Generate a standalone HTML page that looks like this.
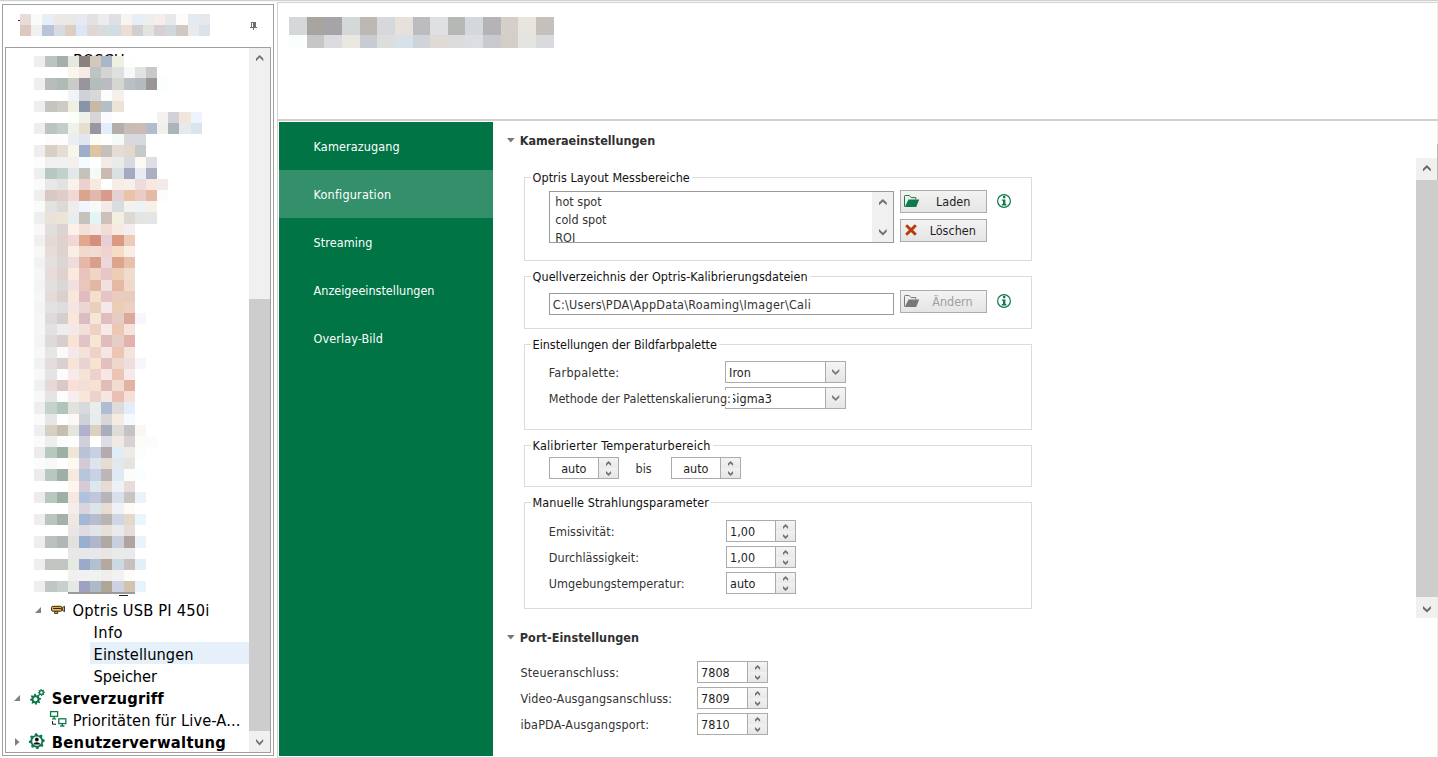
<!DOCTYPE html><html><head><meta charset="utf-8"><title>Optris Einstellungen</title><style>

html,body{margin:0;padding:0;background:#fff}
body{width:1438px;height:758px;position:relative;overflow:hidden;font-family:"DejaVu Sans Condensed","Liberation Sans","DejaVu Sans",sans-serif;font-size:12.5px;color:#1e1e1e}
div,span.t,svg{position:absolute;box-sizing:border-box}
span.t{white-space:pre;display:block}
.grp{border:1px solid #dcdcdc}
.leg{background:#fff;padding:0 2px}
.inp{border:1px solid #ababab;background:#fff}
.btn{border:1px solid #acacac;background:linear-gradient(#f3f3f3,#e5e5e5)}
.sbtn{background:linear-gradient(#f5f5f5,#e6e6e6);border-left:1px solid #ababab}
.nav{color:#fff}

</style></head><body>
<div style="left:0px;top:0px;width:1438px;height:1px;background:#d0d0d0"></div>
<div style="left:0px;top:1px;width:1438px;height:1px;background:#f6f6f6"></div>
<div style="left:2px;top:4px;width:272px;height:752px;border:1px solid #a0a0a0;background:#fff"></div>
<div style="left:5px;top:47px;width:266px;height:706px;border:1px solid #a0a0a0;background:#fff"></div>
<span class="t " style="left:73px;top:50.46px;font-size:16.3px;line-height:21px;font-weight:normal;color:#000;letter-spacing:0px;">BOSCH</span>
<svg width="274" height="758" style="left:0;top:0" shape-rendering="crispEdges"><rect x="20" y="14" width="11" height="11" fill="#e8dcd8"/><rect x="31" y="14" width="11" height="11" fill="#fafaf8"/><rect x="42" y="14" width="12" height="11" fill="#e8eef8"/><rect x="54" y="14" width="11" height="11" fill="#ece8e8"/><rect x="65" y="14" width="11" height="11" fill="#eae8e6"/><rect x="76" y="14" width="11" height="11" fill="#e6e8f2"/><rect x="87" y="14" width="11" height="11" fill="#e4e2e0"/><rect x="98" y="14" width="11" height="11" fill="#ececec"/><rect x="109" y="14" width="12" height="11" fill="#e0e0e4"/><rect x="121" y="14" width="11" height="11" fill="#f8f4f0"/><rect x="132" y="14" width="11" height="11" fill="#e8eef8"/><rect x="143" y="14" width="11" height="11" fill="#ecf0ec"/><rect x="154" y="14" width="11" height="11" fill="#f6eee8"/><rect x="165" y="14" width="11" height="11" fill="#e6e8ec"/><rect x="176" y="14" width="12" height="11" fill="#fefcfa"/><rect x="188" y="14" width="11" height="11" fill="#e4eaf0"/><rect x="199" y="14" width="11" height="11" fill="#e4e8ec"/><rect x="20" y="25" width="11" height="11" fill="#dcc8bc"/><rect x="31" y="25" width="11" height="11" fill="#f0f0f0"/><rect x="42" y="25" width="12" height="11" fill="#bac4d8"/><rect x="54" y="25" width="11" height="11" fill="#d8dce0"/><rect x="65" y="25" width="11" height="11" fill="#dccec0"/><rect x="76" y="25" width="11" height="11" fill="#dce6f4"/><rect x="87" y="25" width="11" height="11" fill="#e0d6d4"/><rect x="98" y="25" width="11" height="11" fill="#d8dcdc"/><rect x="109" y="25" width="12" height="11" fill="#d0dce6"/><rect x="121" y="25" width="11" height="11" fill="#ecdfd2"/><rect x="132" y="25" width="11" height="11" fill="#d0d0d0"/><rect x="143" y="25" width="11" height="11" fill="#e4e4de"/><rect x="154" y="25" width="11" height="11" fill="#d6d0d4"/><rect x="165" y="25" width="11" height="11" fill="#d0d8dc"/><rect x="176" y="25" width="12" height="11" fill="#d0c8c2"/><rect x="188" y="25" width="11" height="11" fill="#e8eaec"/><rect x="199" y="25" width="11" height="11" fill="#dae2ea"/><rect x="34" y="56" width="11" height="11" fill="#eeeeee"/><rect x="45" y="56" width="12" height="11" fill="#bcc4c0"/><rect x="57" y="56" width="11" height="11" fill="#a5b0ab"/><rect x="68" y="56" width="11" height="11" fill="#e4e8e0"/><rect x="79" y="56" width="11" height="11" fill="#8a807c"/><rect x="90" y="56" width="11" height="11" fill="#d4c8b8"/><rect x="101" y="56" width="11" height="11" fill="#a8b8c8"/><rect x="112" y="56" width="12" height="11" fill="#f0f0e0"/><rect x="124" y="56" width="11" height="11" fill="#fdfefe"/><rect x="68" y="67" width="11" height="11" fill="#fbf5ee"/><rect x="79" y="67" width="11" height="11" fill="#f5ebe4"/><rect x="90" y="67" width="11" height="11" fill="#bec4c6"/><rect x="101" y="67" width="11" height="11" fill="#d4d4d2"/><rect x="112" y="67" width="12" height="11" fill="#dfe1df"/><rect x="124" y="67" width="11" height="11" fill="#f5f9f7"/><rect x="135" y="67" width="11" height="11" fill="#e2e2e2"/><rect x="146" y="67" width="11" height="11" fill="#c8cac8"/><rect x="34" y="78" width="11" height="12" fill="#eeeeee"/><rect x="45" y="78" width="12" height="12" fill="#b8bcba"/><rect x="57" y="78" width="11" height="12" fill="#b0bab4"/><rect x="68" y="78" width="11" height="12" fill="#cacac8"/><rect x="79" y="78" width="11" height="12" fill="#98949c"/><rect x="90" y="78" width="11" height="12" fill="#b2beb8"/><rect x="101" y="78" width="11" height="12" fill="#babcc2"/><rect x="112" y="78" width="12" height="12" fill="#d6d6d0"/><rect x="124" y="78" width="11" height="12" fill="#bcc0c4"/><rect x="135" y="78" width="11" height="12" fill="#b4bac2"/><rect x="146" y="78" width="11" height="12" fill="#9a9696"/><rect x="157" y="78" width="11" height="12" fill="#fafefe"/><rect x="68" y="90" width="11" height="11" fill="#eef4f8"/><rect x="79" y="90" width="11" height="11" fill="#d0d0d8"/><rect x="90" y="90" width="11" height="11" fill="#d8d8d8"/><rect x="101" y="90" width="11" height="11" fill="#fcfcfc"/><rect x="112" y="90" width="12" height="11" fill="#f6f0ec"/><rect x="34" y="101" width="11" height="11" fill="#eeeeee"/><rect x="45" y="101" width="12" height="11" fill="#c6c4c0"/><rect x="57" y="101" width="11" height="11" fill="#cecac4"/><rect x="68" y="101" width="11" height="11" fill="#f0f0e2"/><rect x="79" y="101" width="11" height="11" fill="#8a94a8"/><rect x="90" y="101" width="11" height="11" fill="#c8b8a8"/><rect x="101" y="101" width="11" height="11" fill="#b4bec6"/><rect x="112" y="101" width="12" height="11" fill="#ece4d6"/><rect x="68" y="112" width="11" height="11" fill="#fcfefa"/><rect x="79" y="112" width="11" height="11" fill="#eef0ec"/><rect x="90" y="112" width="11" height="11" fill="#d6d6d8"/><rect x="101" y="112" width="11" height="11" fill="#fafaff"/><rect x="157" y="112" width="11" height="11" fill="#f4f2ee"/><rect x="168" y="112" width="11" height="11" fill="#d2d0da"/><rect x="179" y="112" width="12" height="11" fill="#f0e6dc"/><rect x="191" y="112" width="11" height="11" fill="#eef4fc"/><rect x="34" y="123" width="11" height="11" fill="#eeeeee"/><rect x="45" y="123" width="12" height="11" fill="#bcc4c0"/><rect x="57" y="123" width="11" height="11" fill="#c4cec8"/><rect x="68" y="123" width="11" height="11" fill="#eef2ea"/><rect x="79" y="123" width="11" height="11" fill="#e6dece"/><rect x="90" y="123" width="11" height="11" fill="#9a96a0"/><rect x="101" y="123" width="11" height="11" fill="#e2eefa"/><rect x="112" y="123" width="12" height="11" fill="#b4aeaa"/><rect x="124" y="123" width="11" height="11" fill="#c8bcb6"/><rect x="135" y="123" width="11" height="11" fill="#ccbcb2"/><rect x="146" y="123" width="11" height="11" fill="#b4bccc"/><rect x="157" y="123" width="11" height="11" fill="#f0f0ee"/><rect x="168" y="123" width="11" height="11" fill="#acb4b8"/><rect x="179" y="123" width="12" height="11" fill="#e6eaea"/><rect x="191" y="123" width="11" height="11" fill="#d8e4ee"/><rect x="45" y="134" width="12" height="11" fill="#fcfcfc"/><rect x="57" y="134" width="11" height="11" fill="#fcfcfc"/><rect x="68" y="134" width="11" height="11" fill="#eaeef2"/><rect x="79" y="134" width="11" height="11" fill="#e2e6ee"/><rect x="90" y="134" width="11" height="11" fill="#fcfcf4"/><rect x="112" y="134" width="12" height="11" fill="#f4faf8"/><rect x="124" y="134" width="11" height="11" fill="#d8d8de"/><rect x="135" y="134" width="11" height="11" fill="#d4dae0"/><rect x="34" y="145" width="11" height="12" fill="#eeeeee"/><rect x="45" y="145" width="12" height="12" fill="#d8d0c6"/><rect x="57" y="145" width="11" height="12" fill="#e6ded2"/><rect x="68" y="145" width="11" height="12" fill="#f6f6ea"/><rect x="79" y="145" width="11" height="12" fill="#9eaeca"/><rect x="90" y="145" width="11" height="12" fill="#e0c4a2"/><rect x="101" y="145" width="11" height="12" fill="#c6c0bc"/><rect x="112" y="145" width="12" height="12" fill="#e6dcd6"/><rect x="124" y="145" width="11" height="12" fill="#e4d8cc"/><rect x="135" y="145" width="11" height="12" fill="#c4cac8"/><rect x="34" y="157" width="11" height="11" fill="#fcfcfc"/><rect x="45" y="157" width="12" height="11" fill="#f0f0f0"/><rect x="57" y="157" width="11" height="11" fill="#f0f0f0"/><rect x="68" y="157" width="11" height="11" fill="#f4eeec"/><rect x="79" y="157" width="11" height="11" fill="#f2fbff"/><rect x="90" y="157" width="11" height="11" fill="#fcfffe"/><rect x="101" y="157" width="11" height="11" fill="#f4ebe6"/><rect x="112" y="157" width="12" height="11" fill="#eaeae8"/><rect x="124" y="157" width="11" height="11" fill="#d6dade"/><rect x="135" y="157" width="11" height="11" fill="#fafaf2"/><rect x="146" y="157" width="11" height="11" fill="#dedfe4"/><rect x="34" y="168" width="11" height="11" fill="#eeeeee"/><rect x="45" y="168" width="12" height="11" fill="#b8c8c0"/><rect x="57" y="168" width="11" height="11" fill="#c2d2ca"/><rect x="68" y="168" width="11" height="11" fill="#e2e8ea"/><rect x="79" y="168" width="11" height="11" fill="#c4c2ba"/><rect x="90" y="168" width="11" height="11" fill="#f4faf6"/><rect x="101" y="168" width="11" height="11" fill="#cabab2"/><rect x="112" y="168" width="12" height="11" fill="#dae0e4"/><rect x="124" y="168" width="11" height="11" fill="#a4a8c0"/><rect x="135" y="168" width="11" height="11" fill="#e8ecf0"/><rect x="146" y="168" width="11" height="11" fill="#aab0c2"/><rect x="34" y="179" width="11" height="11" fill="#fafafa"/><rect x="45" y="179" width="12" height="11" fill="#e8e8e8"/><rect x="57" y="179" width="11" height="11" fill="#e2e2e2"/><rect x="68" y="179" width="11" height="11" fill="#fcf0ea"/><rect x="79" y="179" width="11" height="11" fill="#ecd0d0"/><rect x="90" y="179" width="11" height="11" fill="#f8e8de"/><rect x="112" y="179" width="12" height="11" fill="#f8ece4"/><rect x="124" y="179" width="11" height="11" fill="#f8eeea"/><rect x="135" y="179" width="11" height="11" fill="#eedcda"/><rect x="146" y="179" width="11" height="11" fill="#f8e8e0"/><rect x="157" y="179" width="11" height="11" fill="#f4eaea"/><rect x="34" y="190" width="11" height="11" fill="#eeeeee"/><rect x="45" y="190" width="12" height="11" fill="#d8c8c4"/><rect x="57" y="190" width="11" height="11" fill="#e0ccc8"/><rect x="68" y="190" width="11" height="11" fill="#f0d8d6"/><rect x="79" y="190" width="11" height="11" fill="#dca48c"/><rect x="90" y="190" width="11" height="11" fill="#e0b8ac"/><rect x="101" y="190" width="11" height="11" fill="#d89a8c"/><rect x="112" y="190" width="12" height="11" fill="#e6d0d4"/><rect x="124" y="190" width="11" height="11" fill="#eac2a6"/><rect x="135" y="190" width="11" height="11" fill="#eaccc6"/><rect x="146" y="190" width="11" height="11" fill="#e4baa4"/><rect x="157" y="190" width="11" height="11" fill="#fcfcfe"/><rect x="34" y="201" width="11" height="11" fill="#fafafa"/><rect x="45" y="201" width="12" height="11" fill="#e2e2e0"/><rect x="57" y="201" width="11" height="11" fill="#dcdad8"/><rect x="68" y="201" width="11" height="11" fill="#f0ecec"/><rect x="79" y="201" width="11" height="11" fill="#f0f6fe"/><rect x="90" y="201" width="11" height="11" fill="#f8faf8"/><rect x="101" y="201" width="11" height="11" fill="#f2eae6"/><rect x="112" y="201" width="12" height="11" fill="#d8dee0"/><rect x="124" y="201" width="11" height="11" fill="#f4f2ec"/><rect x="135" y="201" width="11" height="11" fill="#ecf2f6"/><rect x="146" y="201" width="11" height="11" fill="#f6f0e6"/><rect x="34" y="212" width="11" height="12" fill="#eeeeee"/><rect x="45" y="212" width="12" height="12" fill="#e8e2d8"/><rect x="57" y="212" width="11" height="12" fill="#ece4d6"/><rect x="68" y="212" width="11" height="12" fill="#e8eef0"/><rect x="79" y="212" width="11" height="12" fill="#c4c2ba"/><rect x="90" y="212" width="11" height="12" fill="#e2f4f4"/><rect x="101" y="212" width="11" height="12" fill="#ccc0b8"/><rect x="112" y="212" width="12" height="12" fill="#f2f0e0"/><rect x="124" y="212" width="11" height="12" fill="#dcd8d4"/><rect x="135" y="212" width="11" height="12" fill="#e4e4e0"/><rect x="146" y="212" width="11" height="12" fill="#e4e6e6"/><rect x="34" y="224" width="11" height="11" fill="#f8f8f8"/><rect x="45" y="224" width="12" height="11" fill="#e2dedc"/><rect x="57" y="224" width="11" height="11" fill="#dcd4d4"/><rect x="68" y="224" width="11" height="11" fill="#fcf0e8"/><rect x="79" y="224" width="11" height="11" fill="#f4e0d8"/><rect x="90" y="224" width="11" height="11" fill="#f6e8e4"/><rect x="101" y="224" width="11" height="11" fill="#f2dcd6"/><rect x="112" y="224" width="12" height="11" fill="#f8eae0"/><rect x="124" y="224" width="11" height="11" fill="#f4eeee"/><rect x="34" y="235" width="11" height="11" fill="#f0f0f0"/><rect x="45" y="235" width="12" height="11" fill="#e6d8d6"/><rect x="57" y="235" width="11" height="11" fill="#e0d0ce"/><rect x="68" y="235" width="11" height="11" fill="#f0d8d8"/><rect x="79" y="235" width="11" height="11" fill="#e0a88c"/><rect x="90" y="235" width="11" height="11" fill="#d4907a"/><rect x="101" y="235" width="11" height="11" fill="#e6d0d6"/><rect x="112" y="235" width="12" height="11" fill="#da9a82"/><rect x="124" y="235" width="11" height="11" fill="#eaccb8"/><rect x="34" y="246" width="11" height="11" fill="#f8f8f8"/><rect x="45" y="246" width="12" height="11" fill="#e8dcda"/><rect x="57" y="246" width="11" height="11" fill="#e0d2d0"/><rect x="68" y="246" width="11" height="11" fill="#faeee4"/><rect x="79" y="246" width="11" height="11" fill="#f0d8cc"/><rect x="90" y="246" width="11" height="11" fill="#f0dcd2"/><rect x="101" y="246" width="11" height="11" fill="#f0d2ce"/><rect x="112" y="246" width="12" height="11" fill="#f6dcc4"/><rect x="124" y="246" width="11" height="11" fill="#f8eee4"/><rect x="34" y="257" width="11" height="11" fill="#f2f2f2"/><rect x="45" y="257" width="12" height="11" fill="#e4e0de"/><rect x="57" y="257" width="11" height="11" fill="#dcd6d4"/><rect x="68" y="257" width="11" height="11" fill="#f0dcdc"/><rect x="79" y="257" width="11" height="11" fill="#e4b8a4"/><rect x="90" y="257" width="11" height="11" fill="#d8a08c"/><rect x="101" y="257" width="11" height="11" fill="#ecd8dc"/><rect x="112" y="257" width="12" height="11" fill="#dca68e"/><rect x="124" y="257" width="11" height="11" fill="#e6c2ac"/><rect x="34" y="268" width="11" height="12" fill="#f6f6f6"/><rect x="45" y="268" width="12" height="12" fill="#e8dcda"/><rect x="57" y="268" width="11" height="12" fill="#e0d0ce"/><rect x="68" y="268" width="11" height="12" fill="#faeade"/><rect x="79" y="268" width="11" height="12" fill="#e8c4bc"/><rect x="90" y="268" width="11" height="12" fill="#f0d4c4"/><rect x="101" y="268" width="11" height="12" fill="#e8c6c6"/><rect x="112" y="268" width="12" height="12" fill="#eecdb4"/><rect x="124" y="268" width="11" height="12" fill="#f0dccf"/><rect x="34" y="280" width="11" height="11" fill="#f4f4f4"/><rect x="45" y="280" width="12" height="11" fill="#e0e0e0"/><rect x="57" y="280" width="11" height="11" fill="#d8d8d6"/><rect x="68" y="280" width="11" height="11" fill="#f2e0e0"/><rect x="79" y="280" width="11" height="11" fill="#e8c8bc"/><rect x="90" y="280" width="11" height="11" fill="#e2b8a4"/><rect x="101" y="280" width="11" height="11" fill="#f0e0e0"/><rect x="112" y="280" width="12" height="11" fill="#e4b8a2"/><rect x="124" y="280" width="11" height="11" fill="#f0d8ca"/><rect x="34" y="291" width="11" height="11" fill="#f6f6f6"/><rect x="45" y="291" width="12" height="11" fill="#e4dcd8"/><rect x="57" y="291" width="11" height="11" fill="#dcd0ce"/><rect x="68" y="291" width="11" height="11" fill="#f8e8dc"/><rect x="79" y="291" width="11" height="11" fill="#e0bcc0"/><rect x="90" y="291" width="11" height="11" fill="#f4dece"/><rect x="101" y="291" width="11" height="11" fill="#e4c4c4"/><rect x="112" y="291" width="12" height="11" fill="#eaccbc"/><rect x="124" y="291" width="11" height="11" fill="#eaccbc"/><rect x="34" y="302" width="11" height="11" fill="#f4f4f4"/><rect x="45" y="302" width="12" height="11" fill="#e2e2e2"/><rect x="57" y="302" width="11" height="11" fill="#dedede"/><rect x="68" y="302" width="11" height="11" fill="#f4e4e4"/><rect x="79" y="302" width="11" height="11" fill="#ecd6d2"/><rect x="90" y="302" width="11" height="11" fill="#ebcfbc"/><rect x="101" y="302" width="11" height="11" fill="#f6e8e8"/><rect x="112" y="302" width="12" height="11" fill="#ecceb6"/><rect x="124" y="302" width="11" height="11" fill="#ecd0c0"/><rect x="34" y="313" width="11" height="11" fill="#f6f6f6"/><rect x="45" y="313" width="12" height="11" fill="#dcdadb"/><rect x="57" y="313" width="11" height="11" fill="#d6ceca"/><rect x="68" y="313" width="11" height="11" fill="#f8e8dc"/><rect x="79" y="313" width="11" height="11" fill="#dcbcc2"/><rect x="90" y="313" width="11" height="11" fill="#f6e6d6"/><rect x="101" y="313" width="11" height="11" fill="#e0bebe"/><rect x="112" y="313" width="12" height="11" fill="#e6ccc4"/><rect x="124" y="313" width="11" height="11" fill="#dca89e"/><rect x="135" y="313" width="11" height="11" fill="#f8f6fc"/><rect x="34" y="324" width="11" height="11" fill="#f6f6f6"/><rect x="45" y="324" width="12" height="11" fill="#e2e2e2"/><rect x="57" y="324" width="11" height="11" fill="#ecedec"/><rect x="68" y="324" width="11" height="11" fill="#f4e8e8"/><rect x="79" y="324" width="11" height="11" fill="#f0e0d8"/><rect x="90" y="324" width="11" height="11" fill="#eed0c4"/><rect x="101" y="324" width="11" height="11" fill="#f6eae8"/><rect x="112" y="324" width="12" height="11" fill="#ecc8b4"/><rect x="124" y="324" width="11" height="11" fill="#f6e4dc"/><rect x="34" y="335" width="11" height="12" fill="#f4f4f4"/><rect x="45" y="335" width="12" height="12" fill="#dedada"/><rect x="57" y="335" width="11" height="12" fill="#d8cecc"/><rect x="68" y="335" width="11" height="12" fill="#f8e4d6"/><rect x="79" y="335" width="11" height="12" fill="#e0c4c8"/><rect x="90" y="335" width="11" height="12" fill="#f6e6d4"/><rect x="101" y="335" width="11" height="12" fill="#e0bcba"/><rect x="112" y="335" width="12" height="12" fill="#e8ccc6"/><rect x="124" y="335" width="11" height="12" fill="#e0b4ac"/><rect x="34" y="347" width="11" height="11" fill="#f8f8f8"/><rect x="45" y="347" width="12" height="11" fill="#e6e6e4"/><rect x="57" y="347" width="11" height="11" fill="#fafafa"/><rect x="68" y="347" width="11" height="11" fill="#f4e8ea"/><rect x="79" y="347" width="11" height="11" fill="#f4e2da"/><rect x="90" y="347" width="11" height="11" fill="#eed2c8"/><rect x="101" y="347" width="11" height="11" fill="#f6e6e2"/><rect x="112" y="347" width="12" height="11" fill="#ecc6b2"/><rect x="124" y="347" width="11" height="11" fill="#f4e4dc"/><rect x="34" y="358" width="11" height="11" fill="#f2f2f2"/><rect x="45" y="358" width="12" height="11" fill="#e4dcdc"/><rect x="57" y="358" width="11" height="11" fill="#dcd0ce"/><rect x="68" y="358" width="11" height="11" fill="#f8e4d6"/><rect x="79" y="358" width="11" height="11" fill="#e8d2d2"/><rect x="90" y="358" width="11" height="11" fill="#f6e4d0"/><rect x="101" y="358" width="11" height="11" fill="#e2c0c0"/><rect x="112" y="358" width="12" height="11" fill="#eed8cc"/><rect x="124" y="358" width="11" height="11" fill="#eedede"/><rect x="135" y="358" width="11" height="11" fill="#f8f6fc"/><rect x="34" y="369" width="11" height="11" fill="#f8f8f8"/><rect x="45" y="369" width="12" height="11" fill="#e4e4e4"/><rect x="57" y="369" width="11" height="11" fill="#fcfcfc"/><rect x="68" y="369" width="11" height="11" fill="#f6eaec"/><rect x="79" y="369" width="11" height="11" fill="#f4e4d8"/><rect x="90" y="369" width="11" height="11" fill="#eed0cc"/><rect x="101" y="369" width="11" height="11" fill="#f6e6e4"/><rect x="112" y="369" width="12" height="11" fill="#ecc4b4"/><rect x="124" y="369" width="11" height="11" fill="#f8eaea"/><rect x="34" y="380" width="11" height="11" fill="#f0f0f0"/><rect x="45" y="380" width="12" height="11" fill="#e6d8d4"/><rect x="57" y="380" width="11" height="11" fill="#dcc8c6"/><rect x="68" y="380" width="11" height="11" fill="#f8e0d4"/><rect x="79" y="380" width="11" height="11" fill="#f2e0d8"/><rect x="90" y="380" width="11" height="11" fill="#f6e2d0"/><rect x="101" y="380" width="11" height="11" fill="#e2bcb8"/><rect x="112" y="380" width="12" height="11" fill="#f0dcd0"/><rect x="124" y="380" width="11" height="11" fill="#e0b4a0"/><rect x="34" y="391" width="11" height="11" fill="#f8f8f8"/><rect x="45" y="391" width="12" height="11" fill="#e4e4e4"/><rect x="57" y="391" width="11" height="11" fill="#fcfcfc"/><rect x="68" y="391" width="11" height="11" fill="#f8ecee"/><rect x="79" y="391" width="11" height="11" fill="#f8e6d8"/><rect x="90" y="391" width="11" height="11" fill="#ecd2cc"/><rect x="101" y="391" width="11" height="11" fill="#f6e6e2"/><rect x="112" y="391" width="12" height="11" fill="#eac0b4"/><rect x="124" y="391" width="11" height="11" fill="#f4e0d6"/><rect x="34" y="402" width="11" height="12" fill="#eeeeee"/><rect x="45" y="402" width="12" height="12" fill="#c4d2cc"/><rect x="57" y="402" width="11" height="12" fill="#b0c4ba"/><rect x="68" y="402" width="11" height="12" fill="#e2e2dc"/><rect x="79" y="402" width="11" height="12" fill="#d6dade"/><rect x="90" y="402" width="11" height="12" fill="#eaeeea"/><rect x="101" y="402" width="11" height="12" fill="#b0bcd4"/><rect x="112" y="402" width="12" height="12" fill="#dedcd8"/><rect x="124" y="402" width="11" height="12" fill="#e2eefa"/><rect x="34" y="414" width="11" height="11" fill="#fafafa"/><rect x="45" y="414" width="12" height="11" fill="#e6e6e6"/><rect x="68" y="414" width="11" height="11" fill="#fef8f4"/><rect x="79" y="414" width="11" height="11" fill="#d0d2d8"/><rect x="90" y="414" width="11" height="11" fill="#e8ecec"/><rect x="101" y="414" width="11" height="11" fill="#dad6d6"/><rect x="112" y="414" width="12" height="11" fill="#f4ece2"/><rect x="124" y="414" width="11" height="11" fill="#f4fafe"/><rect x="34" y="425" width="11" height="11" fill="#eeeeee"/><rect x="45" y="425" width="12" height="11" fill="#d6d0c4"/><rect x="57" y="425" width="11" height="11" fill="#c6beae"/><rect x="68" y="425" width="11" height="11" fill="#e4e6de"/><rect x="79" y="425" width="11" height="11" fill="#aeb2ce"/><rect x="90" y="425" width="11" height="11" fill="#dcd0c0"/><rect x="101" y="425" width="11" height="11" fill="#a8aebe"/><rect x="112" y="425" width="12" height="11" fill="#dedcd6"/><rect x="124" y="425" width="11" height="11" fill="#c6c2c4"/><rect x="135" y="425" width="11" height="11" fill="#faf6f0"/><rect x="34" y="436" width="11" height="11" fill="#fafafa"/><rect x="45" y="436" width="12" height="11" fill="#eeeeee"/><rect x="57" y="436" width="11" height="11" fill="#fcfcfc"/><rect x="68" y="436" width="11" height="11" fill="#fcfefc"/><rect x="79" y="436" width="11" height="11" fill="#d0d0dc"/><rect x="90" y="436" width="11" height="11" fill="#fffefa"/><rect x="101" y="436" width="11" height="11" fill="#dcdee4"/><rect x="112" y="436" width="12" height="11" fill="#f0eae4"/><rect x="124" y="436" width="11" height="11" fill="#d8d2d4"/><rect x="135" y="436" width="11" height="11" fill="#fafcf8"/><rect x="146" y="436" width="11" height="11" fill="#fafcfe"/><rect x="34" y="447" width="11" height="11" fill="#ececec"/><rect x="45" y="447" width="12" height="11" fill="#b8c8c0"/><rect x="57" y="447" width="11" height="11" fill="#9cb0a6"/><rect x="68" y="447" width="11" height="11" fill="#f0e6d8"/><rect x="79" y="447" width="11" height="11" fill="#bac2d8"/><rect x="90" y="447" width="11" height="11" fill="#c6d2e4"/><rect x="101" y="447" width="11" height="11" fill="#b4aab0"/><rect x="112" y="447" width="12" height="11" fill="#e0ecf8"/><rect x="124" y="447" width="11" height="11" fill="#eeeae6"/><rect x="135" y="447" width="11" height="11" fill="#fafeff"/><rect x="34" y="458" width="11" height="11" fill="#fcfcfc"/><rect x="45" y="458" width="12" height="11" fill="#f8f8f8"/><rect x="68" y="458" width="11" height="11" fill="#fef8f2"/><rect x="79" y="458" width="11" height="11" fill="#d4cad6"/><rect x="90" y="458" width="11" height="11" fill="#dce4f0"/><rect x="101" y="458" width="11" height="11" fill="#e6dcd2"/><rect x="112" y="458" width="12" height="11" fill="#e4e8ea"/><rect x="124" y="458" width="11" height="11" fill="#e6e4e0"/><rect x="34" y="469" width="11" height="12" fill="#ececec"/><rect x="45" y="469" width="12" height="12" fill="#b8c8c0"/><rect x="57" y="469" width="11" height="12" fill="#9cb0a6"/><rect x="68" y="469" width="11" height="12" fill="#f6eade"/><rect x="79" y="469" width="11" height="12" fill="#b8c6dc"/><rect x="90" y="469" width="11" height="12" fill="#c8d2e4"/><rect x="101" y="469" width="11" height="12" fill="#bcb6b8"/><rect x="112" y="469" width="12" height="12" fill="#e0eaf6"/><rect x="124" y="469" width="11" height="12" fill="#fcfcf8"/><rect x="135" y="469" width="11" height="12" fill="#fafeff"/><rect x="68" y="481" width="11" height="11" fill="#fef6ee"/><rect x="79" y="481" width="11" height="11" fill="#d6cad6"/><rect x="90" y="481" width="11" height="11" fill="#dce8f0"/><rect x="101" y="481" width="11" height="11" fill="#e8dcd2"/><rect x="112" y="481" width="12" height="11" fill="#eef2f6"/><rect x="124" y="481" width="11" height="11" fill="#e8dcda"/><rect x="34" y="492" width="11" height="11" fill="#ececec"/><rect x="45" y="492" width="12" height="11" fill="#b8c8c0"/><rect x="57" y="492" width="11" height="11" fill="#9cb0a6"/><rect x="68" y="492" width="11" height="11" fill="#f6e8e0"/><rect x="79" y="492" width="11" height="11" fill="#aec4de"/><rect x="90" y="492" width="11" height="11" fill="#c2c6da"/><rect x="101" y="492" width="11" height="11" fill="#b8b4bc"/><rect x="112" y="492" width="12" height="11" fill="#dadfec"/><rect x="124" y="492" width="11" height="11" fill="#c8c4c2"/><rect x="135" y="492" width="11" height="11" fill="#eaf2fa"/><rect x="68" y="503" width="11" height="11" fill="#f2eeea"/><rect x="79" y="503" width="11" height="11" fill="#dcd4dc"/><rect x="90" y="503" width="11" height="11" fill="#dee4ec"/><rect x="101" y="503" width="11" height="11" fill="#e8dcd2"/><rect x="112" y="503" width="12" height="11" fill="#eef2f4"/><rect x="124" y="503" width="11" height="11" fill="#fefaf6"/><rect x="34" y="514" width="11" height="11" fill="#eeeeee"/><rect x="45" y="514" width="12" height="11" fill="#bcc4c0"/><rect x="57" y="514" width="11" height="11" fill="#a4b0aa"/><rect x="68" y="514" width="11" height="11" fill="#f0e8e0"/><rect x="79" y="514" width="11" height="11" fill="#a2b8d4"/><rect x="90" y="514" width="11" height="11" fill="#b8bcd0"/><rect x="101" y="514" width="11" height="11" fill="#b8b4b2"/><rect x="112" y="514" width="12" height="11" fill="#d0d6e2"/><rect x="124" y="514" width="11" height="11" fill="#e4d8ca"/><rect x="135" y="514" width="11" height="11" fill="#eaf6fe"/><rect x="68" y="525" width="11" height="11" fill="#e8e6e6"/><rect x="79" y="525" width="11" height="11" fill="#dedce0"/><rect x="90" y="525" width="11" height="11" fill="#e2e4e8"/><rect x="101" y="525" width="11" height="11" fill="#e6e0d8"/><rect x="112" y="525" width="12" height="11" fill="#eaeaec"/><rect x="124" y="525" width="11" height="11" fill="#e6dcd8"/><rect x="34" y="536" width="11" height="12" fill="#eeeeee"/><rect x="45" y="536" width="12" height="12" fill="#bcc0be"/><rect x="57" y="536" width="11" height="12" fill="#b0b8b4"/><rect x="68" y="536" width="11" height="12" fill="#e2e2dc"/><rect x="79" y="536" width="11" height="12" fill="#98b0d0"/><rect x="90" y="536" width="11" height="12" fill="#b0b6cc"/><rect x="101" y="536" width="11" height="12" fill="#b0a8a2"/><rect x="112" y="536" width="12" height="12" fill="#c8d0dc"/><rect x="124" y="536" width="11" height="12" fill="#b0a4a0"/><rect x="135" y="536" width="11" height="12" fill="#eaf2fc"/><rect x="68" y="548" width="11" height="11" fill="#e8e8e8"/><rect x="79" y="548" width="11" height="11" fill="#e6e8ea"/><rect x="90" y="548" width="11" height="11" fill="#e6e8ea"/><rect x="101" y="548" width="11" height="11" fill="#e8e6e2"/><rect x="112" y="548" width="12" height="11" fill="#eaeaea"/><rect x="124" y="548" width="11" height="11" fill="#eaeaea"/><rect x="34" y="559" width="11" height="11" fill="#eeeeee"/><rect x="45" y="559" width="12" height="11" fill="#c2c4c2"/><rect x="57" y="559" width="11" height="11" fill="#c2c4c2"/><rect x="68" y="559" width="11" height="11" fill="#e6e8e2"/><rect x="79" y="559" width="11" height="11" fill="#9aaac8"/><rect x="90" y="559" width="11" height="11" fill="#b2c0d0"/><rect x="101" y="559" width="11" height="11" fill="#b4a8a0"/><rect x="112" y="559" width="12" height="11" fill="#ccd8e2"/><rect x="124" y="559" width="11" height="11" fill="#c8c0c0"/><rect x="135" y="559" width="11" height="11" fill="#e2eef8"/><rect x="68" y="570" width="11" height="11" fill="#f0f0f0"/><rect x="79" y="570" width="11" height="11" fill="#f0f2f2"/><rect x="90" y="570" width="11" height="11" fill="#f0f2f2"/><rect x="101" y="570" width="11" height="11" fill="#f0eeec"/><rect x="112" y="570" width="12" height="11" fill="#f2f2f2"/><rect x="124" y="570" width="11" height="11" fill="#fefcf8"/><rect x="34" y="581" width="11" height="11" fill="#eeeeee"/><rect x="45" y="581" width="12" height="11" fill="#c0c6c4"/><rect x="57" y="581" width="11" height="11" fill="#c6d0cc"/><rect x="68" y="581" width="11" height="11" fill="#e6e8e4"/><rect x="79" y="581" width="11" height="11" fill="#9ea2c0"/><rect x="90" y="581" width="11" height="11" fill="#acbac8"/><rect x="101" y="581" width="11" height="11" fill="#b0a698"/><rect x="112" y="581" width="12" height="11" fill="#ccd2e0"/><rect x="124" y="581" width="11" height="11" fill="#d0c4b0"/><rect x="135" y="581" width="11" height="11" fill="#e6f2fc"/><rect x="68" y="592" width="67" height="2" fill="#9a9a9a"/><rect x="119" y="595" width="9" height="1" fill="#222"/><rect x="18" y="20" width="2" height="1" fill="#5a2020"/></svg>
<svg width="9" height="10" viewBox="0 0 9 10" style="left:249px;top:21px" shape-rendering="crispEdges"><rect x="2" y="1" width="5" height="5" fill="#6e6e6e"/><rect x="3" y="2" width="1" height="4" fill="#fff"/><rect x="1" y="6" width="7" height="1" fill="#6e6e6e"/><rect x="4" y="7" width="1" height="2" fill="#6e6e6e"/></svg>
<div style="left:249px;top:48px;width:21px;height:704px;background:#f0f0f0"></div>
<div style="left:249px;top:299px;width:21px;height:432px;background:#cdcdcd"></div>
<svg width="7.3" height="6.2" viewBox="0 0 7.3 6.2" style="left:255.9px;top:55px;overflow:visible"><path d="M0.00 6.20 L0.00 3.60 L3.65 0.00 L7.30 3.60 L7.30 6.20 L3.65 2.60z" fill="#727272"/></svg>
<svg width="7.2" height="6.4" viewBox="0 0 7.2 6.4" style="left:255.9px;top:738.8px;overflow:visible"><path d="M0.00 0.00 L0.00 2.60 L3.60 6.40 L7.20 2.60 L7.20 0.00 L3.60 3.80z" fill="#727272"/></svg>
<div style="left:90px;top:642px;width:159px;height:22px;background:#e5f0fb"></div>
<span class="t " style="left:72.6px;top:599.86px;font-size:16.3px;line-height:21px;font-weight:normal;color:#000;letter-spacing:0.19px;">Optris USB PI 450i</span>
<span class="t " style="left:93.6px;top:621.86px;font-size:16.3px;line-height:21px;font-weight:normal;color:#000;letter-spacing:0.4px;">Info</span>
<span class="t " style="left:93.6px;top:643.86px;font-size:16.3px;line-height:21px;font-weight:normal;color:#000;letter-spacing:0.05px;">Einstellungen</span>
<span class="t " style="left:93.6px;top:665.86px;font-size:16.3px;line-height:21px;font-weight:normal;color:#000;letter-spacing:-0.1px;">Speicher</span>
<span class="t " style="left:51.8px;top:688.13px;font-size:16.4px;line-height:21px;font-weight:bold;color:#000;letter-spacing:0.2px;">Serverzugriff</span>
<span class="t " style="left:72.8px;top:709.86px;font-size:16.3px;line-height:21px;font-weight:normal;color:#000;letter-spacing:0.12px;">Prioritäten für Live-A...</span>
<span class="t " style="left:51.8px;top:731.53px;font-size:16.4px;line-height:21px;font-weight:bold;color:#000;letter-spacing:0.28px;">Benutzerverwaltung</span>
<svg width="7" height="7" viewBox="0 0 7 7" style="left:35px;top:607px"><path d="M6 0V6H0z" fill="#808080"/></svg>
<svg width="7" height="7" viewBox="0 0 7 7" style="left:14px;top:695px"><path d="M6 0V6H0z" fill="#808080"/></svg>
<svg width="6" height="9" viewBox="0 0 6 9" style="left:15px;top:738px"><path d="M0 0L4.5 4L0 8z" fill="#808080"/></svg>
<svg width="16" height="10" viewBox="0 0 16 10" style="left:50px;top:605px">
<rect x="1.55" y="1.3" width="10.3" height="4.9" rx="1.3" fill="#f6b63a" stroke="#262626" stroke-width="1"/>
<rect x="3.2" y="2.9" width="7.7" height="1.1" fill="#262626"/>
<path d="M12.4 2.5 L14.5 1.3 V6.6 L12.4 5.4z" fill="#f6b63a" stroke="#262626" stroke-width="0.9" stroke-linejoin="round"/>
<rect x="4.6" y="6.8" width="3.1" height="1.7" fill="#f6b63a" stroke="#262626" stroke-width="0.8"/>
</svg>
<svg width="18" height="18" viewBox="0 0 18 18" style="left:29px;top:688px"><path d="M11.99,10.11 L12.10,11.20 L10.52,12.00 L10.29,12.77 L11.16,14.31 L10.46,15.16 L8.78,14.61 L8.07,14.99 L7.59,16.69 L6.50,16.80 L5.70,15.22 L4.93,14.99 L3.39,15.86 L2.54,15.16 L3.09,13.48 L2.71,12.77 L1.01,12.29 L0.90,11.20 L2.48,10.40 L2.71,9.63 L1.84,8.09 L2.54,7.24 L4.22,7.79 L4.93,7.41 L5.41,5.71 L6.50,5.60 L7.30,7.18 L8.07,7.41 L9.61,6.54 L10.46,7.24 L9.91,8.92 L10.29,9.63z M8.50,11.20 A2.0,2.0 0 1 0 4.50,11.20 A2.0,2.0 0 1 0 8.50,11.20z" fill="#0e7a4b" fill-rule="evenodd"/><path d="M15.93,3.80 L16.00,4.50 L14.95,5.01 L14.80,5.49 L15.39,6.50 L14.95,7.05 L13.84,6.66 L13.39,6.90 L13.10,8.03 L12.40,8.10 L11.89,7.05 L11.41,6.90 L10.40,7.49 L9.85,7.05 L10.24,5.94 L10.00,5.49 L8.87,5.20 L8.80,4.50 L9.85,3.99 L10.00,3.51 L9.41,2.50 L9.85,1.95 L10.96,2.34 L11.41,2.10 L11.70,0.97 L12.40,0.90 L12.91,1.95 L13.39,2.10 L14.40,1.51 L14.95,1.95 L14.56,3.06 L14.80,3.51z M13.60,4.50 A1.2,1.2 0 1 0 11.20,4.50 A1.2,1.2 0 1 0 13.60,4.50z" fill="#0e7a4b" fill-rule="evenodd"/></svg>
<svg width="18" height="17" viewBox="0 0 18 17" style="left:49px;top:710px" fill="none" stroke="#0e7a4b" stroke-width="1.3">
<rect x="1.6" y="1.6" width="7" height="4.8"/><path d="M5.1 6.4V8.6 M3 8.8H7.2"/>
<rect x="9.8" y="8.8" width="7" height="4.8"/><path d="M13.3 13.6V15.8 M11.2 16H15.4"/>
<path d="M3.5 11V14.2H7" stroke="#1a1a1a" stroke-width="1"/>
</svg>
<svg width="18" height="18" viewBox="0 0 18 18" style="left:28px;top:732px"><path d="M16.65,7.64 L16.80,9.20 L14.98,10.43 L14.62,11.61 L15.45,13.64 L14.46,14.86 L12.30,14.44 L11.21,15.02 L10.36,17.05 L8.80,17.20 L7.57,15.38 L6.39,15.02 L4.36,15.85 L3.14,14.86 L3.56,12.70 L2.98,11.61 L0.95,10.76 L0.80,9.20 L2.62,7.97 L2.98,6.79 L2.15,4.76 L3.14,3.54 L5.30,3.96 L6.39,3.38 L7.24,1.35 L8.80,1.20 L10.03,3.02 L11.21,3.38 L13.24,2.55 L14.46,3.54 L14.04,5.70 L14.62,6.79z M13.40,9.20 A4.6,4.6 0 1 0 4.20,9.20 A4.6,4.6 0 1 0 13.40,9.20z" fill="#0e7a4b" fill-rule="evenodd"/><circle cx="8.8" cy="7.5" r="1.9" fill="#111"/><path d="M5.5 12.4 C5.5 9.4 12.1 9.4 12.1 12.4z" fill="#111"/></svg>
<div style="left:277px;top:2px;width:1161px;height:756px;border:1px solid #d4d4d4;border-right:1px solid #ececec;background:#fff"></div>
<div style="left:278px;top:119px;width:1160px;height:2px;background:#d0d0d0"></div>
<svg width="300" height="60" style="left:280px;top:0" shape-rendering="crispEdges"><g transform="translate(-280,0)"><rect x="289" y="17" width="18" height="18" fill="#d4d8d8"/><rect x="307" y="17" width="17" height="18" fill="#a8a4a0"/><rect x="324" y="17" width="18" height="18" fill="#a6a4a6"/><rect x="342" y="17" width="18" height="18" fill="#d4d8d8"/><rect x="360" y="17" width="17" height="18" fill="#beb8b4"/><rect x="377" y="17" width="18" height="18" fill="#d6d8dc"/><rect x="395" y="17" width="18" height="18" fill="#e8e0da"/><rect x="413" y="17" width="17" height="18" fill="#bcbcbe"/><rect x="430" y="17" width="18" height="18" fill="#dfe0e2"/><rect x="448" y="17" width="17" height="18" fill="#b6b8b6"/><rect x="465" y="17" width="18" height="18" fill="#d2d8dc"/><rect x="483" y="17" width="18" height="18" fill="#b4b4b6"/><rect x="501" y="17" width="17" height="18" fill="#d6cec8"/><rect x="518" y="17" width="18" height="18" fill="#e8e4de"/><rect x="536" y="17" width="18" height="18" fill="#c4c0bc"/><rect x="289" y="35" width="18" height="13" fill="#fafffe"/><rect x="307" y="35" width="17" height="13" fill="#c6c6c6"/><rect x="324" y="35" width="18" height="13" fill="#dcdce0"/><rect x="342" y="35" width="18" height="13" fill="#eae6e0"/><rect x="360" y="35" width="17" height="13" fill="#c8ccd2"/><rect x="377" y="35" width="18" height="13" fill="#dcdedc"/><rect x="395" y="35" width="18" height="13" fill="#d8e0e8"/><rect x="413" y="35" width="17" height="13" fill="#ced4d8"/><rect x="430" y="35" width="18" height="13" fill="#e0dad4"/><rect x="448" y="35" width="17" height="13" fill="#dcdcdc"/><rect x="465" y="35" width="18" height="13" fill="#dcdee2"/><rect x="483" y="35" width="18" height="13" fill="#c8cace"/><rect x="501" y="35" width="17" height="13" fill="#d4cec8"/><rect x="518" y="35" width="18" height="13" fill="#e4e4e0"/><rect x="536" y="35" width="18" height="13" fill="#d8dade"/></g></svg>
<div style="left:279px;top:122px;width:214px;height:634px;background:#007444"></div>
<div style="left:279px;top:170px;width:214px;height:48px;background:#33906a"></div>
<span class="t " style="left:313.6px;top:138.48px;font-size:12.5px;line-height:17px;font-weight:normal;color:#fff;letter-spacing:0.12px;">Kamerazugang</span>
<span class="t " style="left:313.6px;top:186.48px;font-size:12.5px;line-height:17px;font-weight:normal;color:#fff;letter-spacing:0.2px;">Konfiguration</span>
<span class="t " style="left:313.6px;top:234.48px;font-size:12.5px;line-height:17px;font-weight:normal;color:#fff;letter-spacing:0.1px;">Streaming</span>
<span class="t " style="left:313.6px;top:282.47px;font-size:12.5px;line-height:17px;font-weight:normal;color:#fff;letter-spacing:0.0px;">Anzeigeeinstellungen</span>
<span class="t " style="left:313.6px;top:330.47px;font-size:12.5px;line-height:17px;font-weight:normal;color:#fff;letter-spacing:0.1px;">Overlay-Bild</span>
<svg width="8" height="5" viewBox="0 0 8 5" style="left:507px;top:138px"><path d="M0 0H7.6L3.8 4.4z" fill="#777"/></svg>
<span class="t " style="left:519.8px;top:132.08px;font-size:12.5px;line-height:17px;font-weight:bold;color:#303030;letter-spacing:0px;">Kameraeinstellungen</span>
<svg width="8" height="5" viewBox="0 0 8 5" style="left:507px;top:635px"><path d="M0 0H7.6L3.8 4.4z" fill="#777"/></svg>
<span class="t " style="left:519.8px;top:629.07px;font-size:12.5px;line-height:17px;font-weight:bold;color:#303030;letter-spacing:0.06px;">Port-Einstellungen</span>
<div class="grp" style="left:524px;top:177px;width:508px;height:84px;"></div>
<span class="t leg" style="left:530.6px;top:169.6px;line-height:16px;color:#111;letter-spacing:0.03px">Optris Layout Messbereiche</span>
<div class="grp" style="left:524px;top:276px;width:508px;height:53px;"></div>
<span class="t leg" style="left:530.6px;top:268.6px;line-height:16px;color:#111;letter-spacing:0.04px">Quellverzeichnis der Optris-Kalibrierungsdateien</span>
<div class="grp" style="left:524px;top:344px;width:508px;height:86px;"></div>
<span class="t leg" style="left:530.6px;top:336.6px;line-height:16px;color:#111;letter-spacing:-0.04px">Einstellungen der Bildfarbpalette</span>
<div class="grp" style="left:524px;top:445px;width:508px;height:42px;"></div>
<span class="t leg" style="left:530.6px;top:437.6px;line-height:16px;color:#111;letter-spacing:0.19px">Kalibrierter Temperaturbereich</span>
<div class="grp" style="left:524px;top:502px;width:508px;height:107px;"></div>
<span class="t leg" style="left:530.6px;top:494.6px;line-height:16px;color:#111;letter-spacing:0.07px">Manuelle Strahlungsparameter</span>
<div class="inp" style="border-color:#9a9a9a;left:549px;top:191px;width:345px;height:52px;overflow:hidden"></div>
<div style="left:872px;top:192px;width:21px;height:50px;background:#f0f0f0"></div>
<svg width="7.7" height="6.3" viewBox="0 0 7.7 6.3" style="left:878.6px;top:198.9px;overflow:visible"><path d="M0.00 6.30 L0.00 3.60 L3.85 0.00 L7.70 3.60 L7.70 6.30 L3.85 2.70z" fill="#707070"/></svg>
<svg width="7.7" height="6.4" viewBox="0 0 7.7 6.4" style="left:878.6px;top:228.7px;overflow:visible"><path d="M0.00 0.00 L0.00 2.70 L3.85 6.40 L7.70 2.70 L7.70 0.00 L3.85 3.70z" fill="#707070"/></svg>
<span class="t " style="left:555.3px;top:192.88px;font-size:12.5px;line-height:17px;font-weight:normal;color:#333;letter-spacing:0px;">hot spot</span>
<span class="t " style="left:555.3px;top:210.88px;font-size:12.5px;line-height:17px;font-weight:normal;color:#333;letter-spacing:0px;">cold spot</span>
<div style="left:550px;top:228px;width:322px;height:14px;overflow:hidden">
<span class="t " style="left:5.3px;top:0.87px;font-size:12.5px;line-height:17px;font-weight:normal;color:#333;letter-spacing:0px;">ROI</span>
</div>
<div class="btn" style="left:900px;top:190px;width:87px;height:23px;"></div>
<span class="t " style="left:936.0px;top:192.98px;font-size:12.5px;line-height:17px;font-weight:normal;color:#1e1e1e;letter-spacing:0px;">Laden</span>
<svg width="17" height="14" viewBox="0 0 17 14" style="left:904px;top:194px">
<path d="M0.5 12.6 V2.3 Q0.5 1.5 1.3 1.5 H5.2 L7.2 3.6 H11.8 V5.4" fill="none" stroke="#0e7a4b" stroke-width="1"/>
<path d="M4.5 5.4 H15.2 L12.2 13 H0.8z" fill="#0e7a4b"/>
</svg>
<div class="btn" style="left:900px;top:219px;width:87px;height:23px;"></div>
<span class="t " style="left:929.7px;top:221.98px;font-size:12.5px;line-height:17px;font-weight:normal;color:#1e1e1e;letter-spacing:0px;">Löschen</span>
<svg width="14" height="14" viewBox="0 0 14 14" style="left:904px;top:223px"><path d="M2.2 2.2 L11.8 11.8 M11.8 2.2 L2.2 11.8" stroke="#b83c0a" stroke-width="2.9" fill="none"/></svg>
<svg width="16" height="16" viewBox="0 0 16 16" style="left:996.1px;top:193px">
<circle cx="8" cy="8" r="6.4" fill="none" stroke="#0e7a4b" stroke-width="1.2"/>
<circle cx="8.2" cy="4.1" r="1.35" fill="#0e7a4b"/>
<path d="M5.8 6.6 H9.4 V11 H10.4 V12.4 H5.8 V11 H7 V7.8 H5.8z" fill="#0e7a4b"/>
</svg>
<div class="inp" style="border-color:#9a9a9a;left:549px;top:293px;width:345px;height:22px;"></div>
<span class="t " style="left:552.8px;top:295.87px;font-size:12.5px;line-height:17px;font-weight:normal;color:#333;letter-spacing:0.26px;">C:\Users\PDA\AppData\Roaming\Imager\Cali</span>
<div class="btn" style="left:900px;top:290px;width:87px;height:23px;"></div>
<span class="t " style="left:932.2px;top:292.97px;font-size:12.5px;line-height:17px;font-weight:normal;color:#a0a0a0;letter-spacing:0px;">Ändern</span>
<svg width="17" height="14" viewBox="0 0 17 14" style="left:904px;top:294px">
<path d="M0.5 12.6 V2.3 Q0.5 1.5 1.3 1.5 H5.2 L7.2 3.6 H11.8 V5.4" fill="none" stroke="#787878" stroke-width="1"/>
<path d="M4.5 5.4 H15.2 L12.2 13 H0.8z" fill="#787878"/>
</svg>
<svg width="16" height="16" viewBox="0 0 16 16" style="left:996px;top:293.2px">
<circle cx="8" cy="8" r="6.4" fill="none" stroke="#0e7a4b" stroke-width="1.2"/>
<circle cx="8.2" cy="4.1" r="1.35" fill="#0e7a4b"/>
<path d="M5.8 6.6 H9.4 V11 H10.4 V12.4 H5.8 V11 H7 V7.8 H5.8z" fill="#0e7a4b"/>
</svg>
<div class="inp" style="left:725px;top:361px;width:121px;height:22px;"></div>
<div class="sbtn" style="left:825px;top:362px;width:20px;height:20px;"></div>
<svg width="7.3" height="5.9" viewBox="0 0 7.3 5.9" style="left:832px;top:369px;overflow:visible"><path d="M0.00 0.00 L0.00 2.50 L3.65 5.90 L7.30 2.50 L7.30 0.00 L3.65 3.40z" fill="#7a7a7a"/></svg>
<span class="t " style="left:729.0px;top:363.87px;font-size:12.5px;line-height:17px;font-weight:normal;color:#1e1e1e;letter-spacing:0.1px;">Iron</span>
<div class="inp" style="left:725px;top:387px;width:121px;height:22px;"></div>
<div class="sbtn" style="left:825px;top:388px;width:20px;height:20px;"></div>
<svg width="7.3" height="5.9" viewBox="0 0 7.3 5.9" style="left:832px;top:395px;overflow:visible"><path d="M0.00 0.00 L0.00 2.50 L3.65 5.90 L7.30 2.50 L7.30 0.00 L3.65 3.40z" fill="#7a7a7a"/></svg>
<span class="t " style="left:729.0px;top:389.87px;font-size:12.5px;line-height:17px;font-weight:normal;color:#1e1e1e;letter-spacing:0.1px;">Sigma3</span>
<span class="t " style="left:548.8px;top:364.17px;font-size:12.5px;line-height:17px;font-weight:normal;color:#333;letter-spacing:0.25px;">Farbpalette:</span>
<div style="left:549px;top:390px;width:184px;height:17px;background:#fff"></div>
<span class="t " style="left:548.8px;top:389.87px;font-size:12.5px;line-height:17px;font-weight:normal;color:#333;letter-spacing:-0.03px;">Methode der Palettenskalierung:</span>
<div class="inp" style="left:549px;top:457px;width:70px;height:22px;"></div>
<div style="left:598px;top:458px;width:20px;height:10px;border-left:1px solid #ababab;background:linear-gradient(#f4f4f4,#e9e9e9)"></div>
<div style="left:598px;top:468px;width:20px;height:10px;border-left:1px solid #ababab;background:linear-gradient(#f1f1f1,#e6e6e6)"></div>
<svg width="5.1" height="5.1" viewBox="0 0 5.1 5.1" style="left:606.0px;top:461.0px;overflow:visible"><path d="M0.00 5.10 L0.00 2.50 L2.55 0.00 L5.10 2.50 L5.10 5.10 L2.55 2.60z" fill="#737373"/></svg>
<svg width="5.1" height="5.1" viewBox="0 0 5.1 5.1" style="left:606.0px;top:471.0px;overflow:visible"><path d="M0.00 0.00 L0.00 2.60 L2.55 5.10 L5.10 2.60 L5.10 0.00 L2.55 2.50z" fill="#737373"/></svg>
<span class="t " style="left:561.2px;top:459.87px;font-size:12.5px;line-height:17px;font-weight:normal;color:#1e1e1e;letter-spacing:0px;">auto</span>
<span class="t " style="left:635.6px;top:459.87px;font-size:12.5px;line-height:17px;font-weight:normal;color:#333;letter-spacing:0px;">bis</span>
<div class="inp" style="left:671px;top:457px;width:70px;height:22px;"></div>
<div style="left:720px;top:458px;width:20px;height:10px;border-left:1px solid #ababab;background:linear-gradient(#f4f4f4,#e9e9e9)"></div>
<div style="left:720px;top:468px;width:20px;height:10px;border-left:1px solid #ababab;background:linear-gradient(#f1f1f1,#e6e6e6)"></div>
<svg width="5.1" height="5.1" viewBox="0 0 5.1 5.1" style="left:728.0px;top:461.0px;overflow:visible"><path d="M0.00 5.10 L0.00 2.50 L2.55 0.00 L5.10 2.50 L5.10 5.10 L2.55 2.60z" fill="#737373"/></svg>
<svg width="5.1" height="5.1" viewBox="0 0 5.1 5.1" style="left:728.0px;top:471.0px;overflow:visible"><path d="M0.00 0.00 L0.00 2.60 L2.55 5.10 L5.10 2.60 L5.10 0.00 L2.55 2.50z" fill="#737373"/></svg>
<span class="t " style="left:683.2px;top:459.87px;font-size:12.5px;line-height:17px;font-weight:normal;color:#1e1e1e;letter-spacing:0px;">auto</span>
<span class="t " style="left:548.8px;top:522.88px;font-size:12.5px;line-height:17px;font-weight:normal;color:#333;letter-spacing:0.03px;">Emissivität:</span>
<div class="inp" style="left:726px;top:520px;width:70px;height:22px;"></div>
<div style="left:775px;top:521px;width:20px;height:10px;border-left:1px solid #ababab;background:linear-gradient(#f4f4f4,#e9e9e9)"></div>
<div style="left:775px;top:531px;width:20px;height:10px;border-left:1px solid #ababab;background:linear-gradient(#f1f1f1,#e6e6e6)"></div>
<svg width="5.1" height="5.1" viewBox="0 0 5.1 5.1" style="left:783.0px;top:524.0px;overflow:visible"><path d="M0.00 5.10 L0.00 2.50 L2.55 0.00 L5.10 2.50 L5.10 5.10 L2.55 2.60z" fill="#737373"/></svg>
<svg width="5.1" height="5.1" viewBox="0 0 5.1 5.1" style="left:783.0px;top:534.0px;overflow:visible"><path d="M0.00 0.00 L0.00 2.60 L2.55 5.10 L5.10 2.60 L5.10 0.00 L2.55 2.50z" fill="#737373"/></svg>
<span class="t " style="left:730.0px;top:522.88px;font-size:12.5px;line-height:17px;font-weight:normal;color:#1e1e1e;letter-spacing:0.05px;">1,00</span>
<span class="t " style="left:548.8px;top:548.88px;font-size:12.5px;line-height:17px;font-weight:normal;color:#333;letter-spacing:0.03px;">Durchlässigkeit:</span>
<div class="inp" style="left:726px;top:546px;width:70px;height:22px;"></div>
<div style="left:775px;top:547px;width:20px;height:10px;border-left:1px solid #ababab;background:linear-gradient(#f4f4f4,#e9e9e9)"></div>
<div style="left:775px;top:557px;width:20px;height:10px;border-left:1px solid #ababab;background:linear-gradient(#f1f1f1,#e6e6e6)"></div>
<svg width="5.1" height="5.1" viewBox="0 0 5.1 5.1" style="left:783.0px;top:550.0px;overflow:visible"><path d="M0.00 5.10 L0.00 2.50 L2.55 0.00 L5.10 2.50 L5.10 5.10 L2.55 2.60z" fill="#737373"/></svg>
<svg width="5.1" height="5.1" viewBox="0 0 5.1 5.1" style="left:783.0px;top:560.0px;overflow:visible"><path d="M0.00 0.00 L0.00 2.60 L2.55 5.10 L5.10 2.60 L5.10 0.00 L2.55 2.50z" fill="#737373"/></svg>
<span class="t " style="left:730.0px;top:548.88px;font-size:12.5px;line-height:17px;font-weight:normal;color:#1e1e1e;letter-spacing:0.05px;">1,00</span>
<span class="t " style="left:548.8px;top:574.88px;font-size:12.5px;line-height:17px;font-weight:normal;color:#333;letter-spacing:0.03px;">Umgebungstemperatur:</span>
<div class="inp" style="left:726px;top:572px;width:70px;height:22px;"></div>
<div style="left:775px;top:573px;width:20px;height:10px;border-left:1px solid #ababab;background:linear-gradient(#f4f4f4,#e9e9e9)"></div>
<div style="left:775px;top:583px;width:20px;height:10px;border-left:1px solid #ababab;background:linear-gradient(#f1f1f1,#e6e6e6)"></div>
<svg width="5.1" height="5.1" viewBox="0 0 5.1 5.1" style="left:783.0px;top:576.0px;overflow:visible"><path d="M0.00 5.10 L0.00 2.50 L2.55 0.00 L5.10 2.50 L5.10 5.10 L2.55 2.60z" fill="#737373"/></svg>
<svg width="5.1" height="5.1" viewBox="0 0 5.1 5.1" style="left:783.0px;top:586.0px;overflow:visible"><path d="M0.00 0.00 L0.00 2.60 L2.55 5.10 L5.10 2.60 L5.10 0.00 L2.55 2.50z" fill="#737373"/></svg>
<span class="t " style="left:730.0px;top:574.88px;font-size:12.5px;line-height:17px;font-weight:normal;color:#1e1e1e;letter-spacing:0.05px;">auto</span>
<span class="t " style="left:520.5px;top:664.17px;font-size:12.5px;line-height:17px;font-weight:normal;color:#333;letter-spacing:0.16px;">Steueranschluss:</span>
<div class="inp" style="left:697px;top:661px;width:71px;height:22px;"></div>
<div style="left:747px;top:662px;width:20px;height:10px;border-left:1px solid #ababab;background:linear-gradient(#f4f4f4,#e9e9e9)"></div>
<div style="left:747px;top:672px;width:20px;height:10px;border-left:1px solid #ababab;background:linear-gradient(#f1f1f1,#e6e6e6)"></div>
<svg width="5.1" height="5.1" viewBox="0 0 5.1 5.1" style="left:755.0px;top:665.0px;overflow:visible"><path d="M0.00 5.10 L0.00 2.50 L2.55 0.00 L5.10 2.50 L5.10 5.10 L2.55 2.60z" fill="#737373"/></svg>
<svg width="5.1" height="5.1" viewBox="0 0 5.1 5.1" style="left:755.0px;top:675.0px;overflow:visible"><path d="M0.00 0.00 L0.00 2.60 L2.55 5.10 L5.10 2.60 L5.10 0.00 L2.55 2.50z" fill="#737373"/></svg>
<span class="t " style="left:701.0px;top:663.88px;font-size:12.5px;line-height:17px;font-weight:normal;color:#1e1e1e;letter-spacing:0.05px;">7808</span>
<span class="t " style="left:520.5px;top:690.17px;font-size:12.5px;line-height:17px;font-weight:normal;color:#333;letter-spacing:0.1px;">Video-Ausgangsanschluss:</span>
<div class="inp" style="left:697px;top:687px;width:71px;height:22px;"></div>
<div style="left:747px;top:688px;width:20px;height:10px;border-left:1px solid #ababab;background:linear-gradient(#f4f4f4,#e9e9e9)"></div>
<div style="left:747px;top:698px;width:20px;height:10px;border-left:1px solid #ababab;background:linear-gradient(#f1f1f1,#e6e6e6)"></div>
<svg width="5.1" height="5.1" viewBox="0 0 5.1 5.1" style="left:755.0px;top:691.0px;overflow:visible"><path d="M0.00 5.10 L0.00 2.50 L2.55 0.00 L5.10 2.50 L5.10 5.10 L2.55 2.60z" fill="#737373"/></svg>
<svg width="5.1" height="5.1" viewBox="0 0 5.1 5.1" style="left:755.0px;top:701.0px;overflow:visible"><path d="M0.00 0.00 L0.00 2.60 L2.55 5.10 L5.10 2.60 L5.10 0.00 L2.55 2.50z" fill="#737373"/></svg>
<span class="t " style="left:701.0px;top:689.88px;font-size:12.5px;line-height:17px;font-weight:normal;color:#1e1e1e;letter-spacing:0.05px;">7809</span>
<span class="t " style="left:520.5px;top:716.17px;font-size:12.5px;line-height:17px;font-weight:normal;color:#333;letter-spacing:0.17px;">ibaPDA-Ausgangsport:</span>
<div class="inp" style="left:697px;top:713px;width:71px;height:22px;"></div>
<div style="left:747px;top:714px;width:20px;height:10px;border-left:1px solid #ababab;background:linear-gradient(#f4f4f4,#e9e9e9)"></div>
<div style="left:747px;top:724px;width:20px;height:10px;border-left:1px solid #ababab;background:linear-gradient(#f1f1f1,#e6e6e6)"></div>
<svg width="5.1" height="5.1" viewBox="0 0 5.1 5.1" style="left:755.0px;top:717.0px;overflow:visible"><path d="M0.00 5.10 L0.00 2.50 L2.55 0.00 L5.10 2.50 L5.10 5.10 L2.55 2.60z" fill="#737373"/></svg>
<svg width="5.1" height="5.1" viewBox="0 0 5.1 5.1" style="left:755.0px;top:727.0px;overflow:visible"><path d="M0.00 0.00 L0.00 2.60 L2.55 5.10 L5.10 2.60 L5.10 0.00 L2.55 2.50z" fill="#737373"/></svg>
<span class="t " style="left:701.0px;top:715.88px;font-size:12.5px;line-height:17px;font-weight:normal;color:#1e1e1e;letter-spacing:0.05px;">7810</span>
<div style="left:1416px;top:158px;width:21px;height:460px;background:#f0f0f0"></div>
<div style="left:1416px;top:180px;width:22px;height:417px;background:#cdcdcd"></div>
<svg width="7.7" height="6.4" viewBox="0 0 7.7 6.4" style="left:1422.8px;top:164.7px;overflow:visible"><path d="M0.00 6.40 L0.00 3.70 L3.85 0.00 L7.70 3.70 L7.70 6.40 L3.85 2.70z" fill="#686868"/></svg>
<svg width="7.9" height="6.4" viewBox="0 0 7.9 6.4" style="left:1422.6px;top:605.6px;overflow:visible"><path d="M0.00 0.00 L0.00 2.70 L3.95 6.40 L7.90 2.70 L7.90 0.00 L3.95 3.70z" fill="#686868"/></svg>
<div style="left:1437px;top:122px;width:1px;height:22px;background:#ececec"></div>
<div style="left:1437px;top:144px;width:1px;height:36px;background:#b8b8b8"></div>
<div style="left:1437px;top:618px;width:1px;height:138px;background:#ececec"></div>
</body></html>
